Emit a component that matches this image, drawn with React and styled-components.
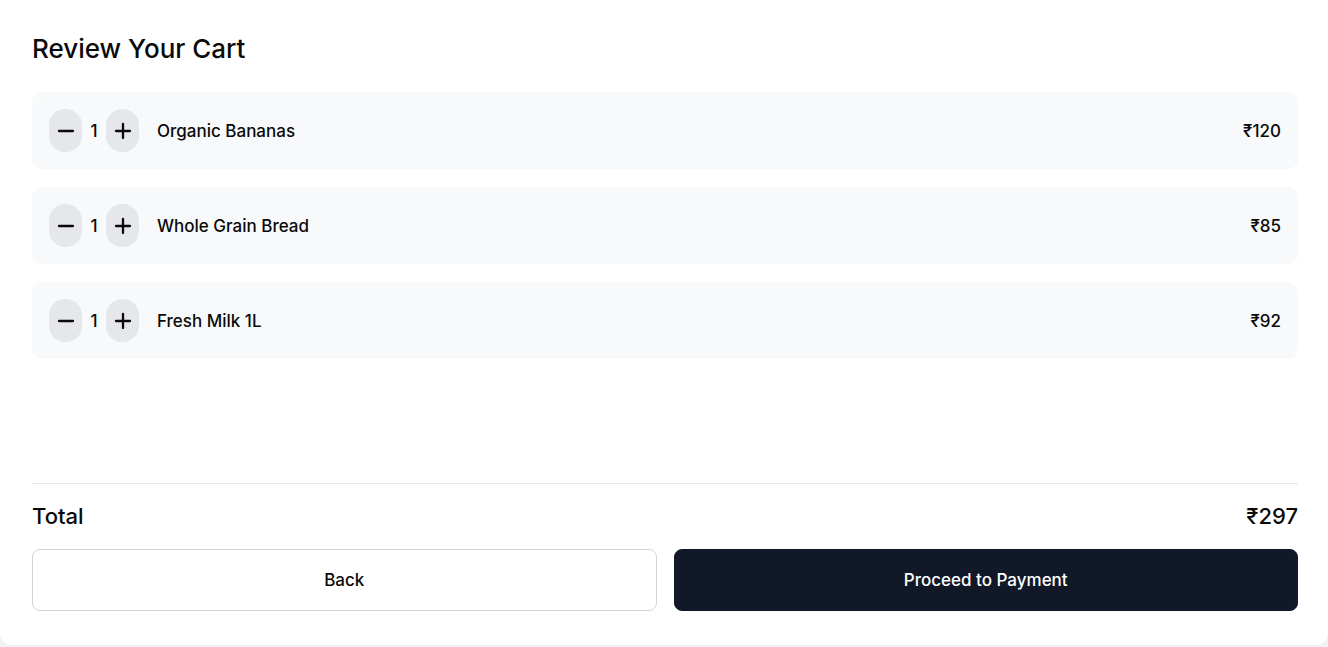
import React, { useState } from 'react';
import styled, { createGlobalStyle } from 'styled-components';

const GlobalStyle = createGlobalStyle`
	* {
		box-sizing: border-box;
	}
	body {
		margin: 0;
		background: #f1f2f4;
		font-family: Inter, 'Noto Sans', sans-serif;
		color: #0a0a0a;
	}
`;

const Card = styled.div`
	height: 645px;
	background: #ffffff;
	border-radius: 0 0 12px 12px;
	padding: 33px 30px 34px 32px;
	display: flex;
	flex-direction: column;
`;

const Title = styled.h2`
	margin: 0 0 27px;
	font-size: 26px;
	line-height: 32px;
	font-weight: 500;
`;

const List = styled.div`
	flex: 1;
	display: flex;
	flex-direction: column;
	gap: 18px;
`;

const Row = styled.div`
	display: flex;
	align-items: center;
	height: 77px;
	padding: 0 17px;
	background: #f8f9fa;
	border-radius: 10px;
`;

const Stepper = styled.div`
	display: flex;
	align-items: center;
	gap: 8px;
	margin-right: 18px;
`;

const StepButton = styled.button`
	width: 33px;
	height: 43px;
	border: none;
	border-radius: 16px;
	background: #e5e7eb;
	display: flex;
	align-items: center;
	justify-content: center;
	padding: 0;
	color: #0a0a0a;
	cursor: pointer;
`;

const Qty = styled.span`
	font-size: 17px;
	font-weight: 500;
	min-width: 8px;
	text-align: center;
`;

const Name = styled.span`
	flex: 1;
	font-size: 17px;
	font-weight: 500;
`;

const Price = styled.span`
	font-size: 17px;
	font-weight: 500;
`;

const Footer = styled.div`
	border-top: 1px solid #e5e7eb;
	padding-top: 18px;
	display: flex;
	flex-direction: column;
	gap: 19px;
`;

const TotalRow = styled.div`
	display: flex;
	justify-content: space-between;
	align-items: center;
	font-size: 22px;
	line-height: 28px;
	font-weight: 500;
`;

const Actions = styled.div`
	display: grid;
	grid-template-columns: 1fr 1fr;
	gap: 17px;
`;

const ActionButton = styled.button`
	height: 62px;
	border-radius: 8px;
	font-family: inherit;
	font-size: 17px;
	font-weight: 500;
	cursor: pointer;
	border: 1px solid ${({ $primary }) => ($primary ? '#111827' : '#d4d4d8')};
	background: ${({ $primary }) => ($primary ? '#111827' : '#ffffff')};
	color: ${({ $primary }) => ($primary ? '#ffffff' : '#0a0a0a')};
`;

const Minus = () => (
	<svg width="24" height="24" viewBox="0 0 24 24" fill="none" stroke="currentColor" strokeWidth="2.3" strokeLinecap="round">
		<path d="M5 12h14" />
	</svg>
);

const Plus = () => (
	<svg width="24" height="24" viewBox="0 0 24 24" fill="none" stroke="currentColor" strokeWidth="2.3" strokeLinecap="round">
		<path d="M5 12h14M12 5v14" />
	</svg>
);

const initialItems = [
	{ id: 1, name: 'Organic Bananas', price: 120, qty: 1 },
	{ id: 2, name: 'Whole Grain Bread', price: 85, qty: 1 },
	{ id: 3, name: 'Fresh Milk 1L', price: 92, qty: 1 },
];

export default function App() {
	const [items, setItems] = useState(initialItems);

	const changeQty = (id, delta) =>
		setItems((list) =>
			list.map((item) => (item.id === id ? { ...item, qty: Math.max(1, item.qty + delta) } : item)),
		);

	const total = items.reduce((sum, item) => sum + item.price * item.qty, 0);

	return (
		<>
			<GlobalStyle />
			<Card>
				<Title>Review Your Cart</Title>
				<List>
					{items.map((item) => (
						<Row key={item.id}>
							<Stepper>
								<StepButton onClick={() => changeQty(item.id, -1)}>
									<Minus />
								</StepButton>
								<Qty>{item.qty}</Qty>
								<StepButton onClick={() => changeQty(item.id, 1)}>
									<Plus />
								</StepButton>
							</Stepper>
							<Name>{item.name}</Name>
							<Price>₹{item.price * item.qty}</Price>
						</Row>
					))}
				</List>
				<Footer>
					<TotalRow>
						<span>Total</span>
						<span>₹{total}</span>
					</TotalRow>
					<Actions>
						<ActionButton>Back</ActionButton>
						<ActionButton $primary>Proceed to Payment</ActionButton>
					</Actions>
				</Footer>
			</Card>
		</>
	);
}
